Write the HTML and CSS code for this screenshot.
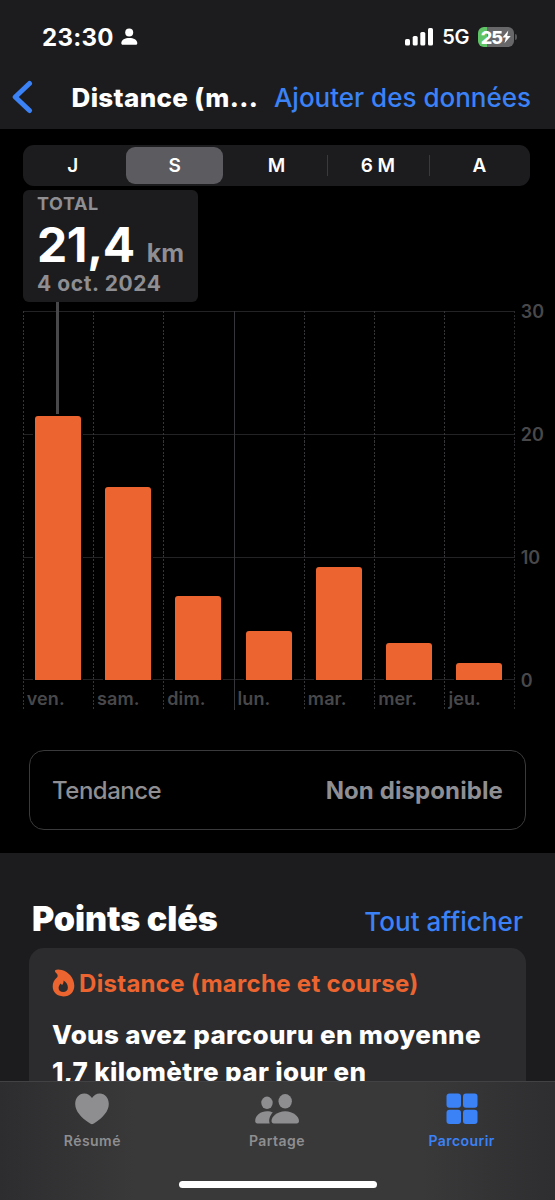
FILE: index.html
```html
<!DOCTYPE html>
<html lang="fr">
<head>
<meta charset="UTF-8" />
<title>Distance</title>
<link rel="stylesheet" href="styles.css">
</head>
<body>
<div class="phone">
  <header class="header">
    <div class="status">
      <span class="time">23:30</span>
      <svg class="user" width="17" height="18" viewBox="0 0 17 18"><circle cx="8.2" cy="4.6" r="4"/><path d="M.3 15.2C.3 11.600 4 9.900 8.300 9.900s8 1.700 8 5.300c0 .9-.5 1.500-1.500 1.500h-13C.8 16.700.3 16.100.3 15.200z"/></svg>
      <span class="spacer"></span>
      <svg width="29" height="18" viewBox="0 0 29 18" fill="#fff"><rect x="0" y="11" width="5" height="6.500" rx="1.600"/><rect x="7.700" y="8" width="5" height="9.500" rx="1.600"/><rect x="15.300" y="4" width="5" height="13.500" rx="1.600"/><rect x="23" y="0" width="5" height="17.500" rx="1.600"/></svg>
      <span class="network">5G</span>
      <span class="battery">25<svg width="9" height="14" viewBox="0 0 9 14"><path d="M6.300.5.5 7.600h3.300L2.500 13.300 8.700 6H5.200z" fill="#fff"/></svg></span>
      <span class="battery-cap"></span>
    </div>
    <nav class="nav">
      <svg class="back" width="22" height="34" viewBox="0 0 22 34"><path d="M17.500 3.500 3.200 17l14.300 13.500" fill="none" stroke="#3b82f7" stroke-width="5" stroke-linecap="round" stroke-linejoin="round"/></svg>
      <h1>Distance (m...</h1>
      <a class="add">Ajouter des données</a>
    </nav>
  </header>

  <main class="main">
    <div class="segments">
      <span>J</span>
      <span class="active">S</span>
      <span>M</span>
      <span class="sep">6 M</span>
      <span class="sep">A</span>
    </div>

    <div class="callout">
      <div class="callout-label">TOTAL</div>
      <div class="callout-value"><b>21,4</b><span>km</span></div>
      <div class="callout-date">4 oct. 2024</div>
    </div>

    <div class="chart">
      <div class="plot">
        <div class="day"><div class="bar" style="height:264px"></div><span>ven.</span></div>
        <div class="day"><div class="bar" style="height:193px"></div><span>sam.</span></div>
        <div class="day"><div class="bar" style="height:84px"></div><span>dim.</span></div>
        <div class="day week"><div class="bar" style="height:49px"></div><span>lun.</span></div>
        <div class="day"><div class="bar" style="height:113px"></div><span>mar.</span></div>
        <div class="day"><div class="bar" style="height:37px"></div><span>mer.</span></div>
        <div class="day"><div class="bar" style="height:17px"></div><span>jeu.</span></div>
        <div class="stem"></div>
      </div>
      <div class="axis"><span>30</span><span>20</span><span>10</span><span>0</span></div>
    </div>

    <div class="trend"><span>Tendance</span><b>Non disponible</b></div>
  </main>

  <section class="highlights">
    <div class="highlights-head"><h2>Points clés</h2><a>Tout afficher</a></div>
    <div class="card">
      <h3>
        <svg width="23" height="28" viewBox="0 0 23 28"><path fill="#ec6530" fill-rule="evenodd" d="M3.200 1.200C4.600.2 7.100.2 9.800 1c6.500 1.700 12.500 8 12.500 15.700 0 6.300-4.400 10.700-10.900 10.700C4.900 27.400.7 23.200.7 17.600c0-3.500 1.300-6.400 3.700-8.500C5.800 7.800 6 6.500 5.200 5.200 4.700 4.300 3 3.400 3 2.200c0-.4 0-.7.200-1zM11.500 11.600c.3 2.100-.5 3.400-1.300 4.400-.5-.5-1-.9-1.500-1.600-1.300 1.400-2.100 2.900-2.100 4.600 0 2.600 2 4.100 4.500 4.100 2.900 0 4.800-1.700 4.800-4.500 0-3.200-2-5.700-4.400-7z"/></svg>
        <span>Distance (marche et course)</span>
      </h3>
      <p>Vous avez parcouru en moyenne<br>1,7 kilomètre par jour en</p>
    </div>
  </section>

  <footer class="tabbar">
    <div class="tab">
      <svg width="36" height="34" viewBox="0 0 36 34"><path d="M18 32.300c-.8 0-1.700-.6-2.600-1.200C7.500 26 1.200 19.300 1.200 12 1.200 6 5.100 1.500 10.200 1.500c3.400 0 6.100 1.700 7.800 4.600 1.700-2.900 4.400-4.600 7.800-4.600 5.100 0 9 4.500 9 10.500 0 7.300-6.300 14-14.200 19.100-.9.600-1.800 1.200-2.600 1.200z"/></svg>
      <span>Résumé</span>
    </div>
    <div class="tab">
      <svg width="46" height="34" viewBox="0 0 46 34"><ellipse cx="13" cy="10.800" rx="5.700" ry="6.200"/><path d="M18.800 20.600C17.300 19.700 15.300 19.300 13 19.300c-6.300 0-11.800 4.200-11.800 9.700 0 1.500.8 2.400 2.300 2.400h12.200c-1.400-3.500.3-8 3.100-10.800z"/><ellipse cx="31.200" cy="9.300" rx="6.700" ry="7.200"/><path d="M31.200 19.300c-8 0-13.700 5.200-13.700 9.800 0 1.500.9 2.300 2.400 2.300h22.700c1.500 0 2.400-.8 2.400-2.300 0-4.600-5.800-9.800-13.800-9.800z"/></svg>
      <span>Partage</span>
    </div>
    <div class="tab selected">
      <svg width="34" height="34" viewBox="0 0 34 34"><rect x="1.500" y="1.500" width="14.500" height="14.300" rx="3"/><rect x="18" y="1.500" width="14.500" height="14.300" rx="3"/><rect x="1.500" y="17.800" width="14.500" height="14.300" rx="3"/><rect x="18" y="17.800" width="14.500" height="14.300" rx="3"/></svg>
      <span>Parcourir</span>
    </div>
    <div class="home"></div>
  </footer>
</div>
</body>
</html>
```
FILE: styles.css
```css
* {
  box-sizing: border-box;
}
body {
  margin: 0;
  background: #000;
  color: #fff;
  font-family: Inter, "Liberation Sans", sans-serif;
}
h1, h2, h3, p {
  margin: 0;
}
svg {
  display: block;
  flex: none;
}
.phone {
  width: 555px;
  height: 1200px;
  display: flex;
  flex-direction: column;
  overflow: hidden;
  white-space: nowrap;
}

/* header */
.header {
  height: 129px;
  background: #1c1c1e;
  flex: none;
}
.status {
  height: 74px;
  padding: 0 38px 0 42px;
  display: flex;
  align-items: center;
}
.time {
  font-size: 24px;
  font-weight: 700;
  letter-spacing: .3px;
}
.user {
  margin-left: 7px;
  fill: #fff;
}
.spacer {
  flex: 1;
}
.network {
  margin-left: 8px;
  font-size: 20px;
  font-weight: 600;
  letter-spacing: -.4px;
}
.battery {
  display: flex;
  align-items: center;
  justify-content: center;
  width: 36px;
  height: 20px;
  margin-left: 9px;
  border-radius: 6px;
  background: linear-gradient(90deg, #5fc466 25%, #67676a 25%);
  font-size: 18px;
  font-weight: 800;
  letter-spacing: -.9px;
}
.battery-cap {
  width: 2px;
  height: 6px;
  margin-left: 1px;
  border-radius: 0 2px 2px 0;
  background: #55555a;
}
.nav {
  height: 46px;
  padding: 0 24px 0 12px;
  display: flex;
  align-items: center;
}
.nav h1 {
  margin-left: 37.500px;
  font-size: 26px;
  font-weight: 800;
  letter-spacing: .35px;
}
.add {
  margin-left: auto;
  font-size: 26px;
  font-weight: 500;
  color: #3b82f7;
}

/* chart screen */
.main {
  height: 724px;
  flex: none;
  padding: 16px 0 0 23px;
}
.segments {
  display: grid;
  grid-template-columns: repeat(5, 1fr);
  width: 507px;
  height: 41px;
  padding: 2px 0;
  border-radius: 11px;
  background: #1c1c1e;
  font-size: 19px;
  font-weight: 600;
  line-height: 37px;
  text-align: center;
}
.segments span:first-child {
  margin-right: 2px;
}
.segments .active {
  margin: 0 3px 0 2px;
  border-radius: 9px;
  background: #5b5b60;
}
.segments .sep {
  background: linear-gradient(#3a3a3d, #3a3a3d) left center / 1px 21px no-repeat;
}
.callout {
  width: 175px;
  height: 112px;
  margin-top: 4px;
  padding: 4px 0 0 14px;
  border-radius: 6px;
  background: #1c1c1e;
  color: #8e8e93;
  font-weight: 700;
}
.callout-label {
  font-size: 18px;
  line-height: 20px;
  letter-spacing: .6px;
}
.callout-value {
  height: 58px;
  padding-top: 4px;
  display: flex;
  align-items: baseline;
}
.callout-value b {
  color: #fff;
  font-size: 48px;
  font-weight: 700;
  line-height: 53px;
  letter-spacing: -.4px;
}
.callout-value span {
  margin-left: 12px;
  font-size: 25px;
  letter-spacing: -.2px;
}
.callout-date {
  font-size: 21px;
  line-height: 24px;
  letter-spacing: .6px;
}
.chart {
  display: flex;
  margin-top: 9px;
  height: 399px;
}
.plot {
  position: relative;
  display: grid;
  grid-template-columns: repeat(7, 1fr);
  width: 492px;
  margin-left: -.3px;
  background:
    repeating-linear-gradient(#2b2b2d 0 2px, transparent 2px 3.700px) right top / 1px 100% no-repeat,
    repeating-linear-gradient(#232325 0 1px, transparent 1px 122.800px) left top / 100% 370px no-repeat;
}
.day {
  display: flex;
  flex-direction: column;
  background: repeating-linear-gradient(#363638 0 2px, transparent 2px 3.700px) left top / 1px 100% no-repeat;
}
.day.week {
  background: linear-gradient(#363638, #363638) left top / 1px 100% no-repeat;
}
.bar {
  width: 46px;
  margin: auto 0 0 12px;
  border-radius: 3px 3px 0 0;
  background: #ec6530;
  box-shadow: 0 0 0 2px #000;
}
.day span {
  height: 30px;
  padding-left: 4px;
  color: #48484a;
  font-size: 18px;
  font-weight: 600;
  line-height: 38px;
  letter-spacing: .1px;
}
.stem {
  position: absolute;
  left: 33.500px;
  top: -9px;
  width: 3px;
  height: 112px;
  background: #48484a;
}
.axis {
  display: flex;
  flex-direction: column;
  justify-content: space-between;
  height: 389px;
  margin: -9px 0 0 6px;
  color: #48484a;
  font-size: 18px;
  font-weight: 600;
  line-height: 20px;
}
.trend {
  display: flex;
  align-items: center;
  justify-content: space-between;
  width: 497px;
  height: 80px;
  margin: 40px 0 0 6px;
  padding: 0 22px;
  border: 1px solid #3a3a3c;
  border-radius: 15px;
  color: #8e8e93;
  font-size: 24px;
}
.trend span {
  font-weight: 500;
  letter-spacing: -.5px;
}
.trend b {
  font-weight: 700;
  letter-spacing: .1px;
}

/* highlights */
.highlights {
  height: 228px;
  flex: none;
  overflow: hidden;
  padding: 0 29px;
  background: #1c1c1e;
}
.highlights-head {
  display: flex;
  align-items: baseline;
  justify-content: space-between;
  height: 95px;
  padding: 45px 3px 0;
}
.highlights-head h2 {
  font-size: 34px;
  font-weight: 900;
  letter-spacing: -.1px;
}
.highlights-head a {
  font-size: 26px;
  font-weight: 500;
  letter-spacing: .05px;
  color: #3b82f7;
}
.card {
  height: 200px;
  padding: 20px 23px;
  border-radius: 15px;
  background: #2c2c2e;
}
.card h3 {
  display: flex;
  align-items: center;
  gap: 4px;
  height: 30px;
  color: #ec6530;
  font-size: 24px;
  font-weight: 700;
  letter-spacing: .3px;
}
.card p {
  margin-top: 18px;
  font-size: 26px;
  font-weight: 800;
  line-height: 37px;
  letter-spacing: .35px;
}

/* tab bar */
.tabbar {
  display: grid;
  grid-template-columns: repeat(3, 1fr);
  height: 119px;
  padding-right: 1px;
  border-top: 1px solid #424244;
  background: linear-gradient(90deg, #2d2d2f, #39393a 24%, #39393a 76%, #2e2e30);
}
.tab {
  display: flex;
  flex-direction: column;
  align-items: center;
  padding-top: 10px;
  color: #8e8e90;
  fill: #8e8e90;
  font-size: 14px;
  font-weight: 600;
  letter-spacing: .45px;
}
.tab span {
  margin-top: 6px;
}
.tab.selected {
  color: #3b82f7;
  fill: #3b82f7;
}
.home {
  grid-column: 1 / 4;
  justify-self: center;
  align-self: end;
  width: 198px;
  height: 7px;
  margin-bottom: 12px;
  margin-left: 2px;
  border-radius: 4px;
  background: #fff;
}
```
